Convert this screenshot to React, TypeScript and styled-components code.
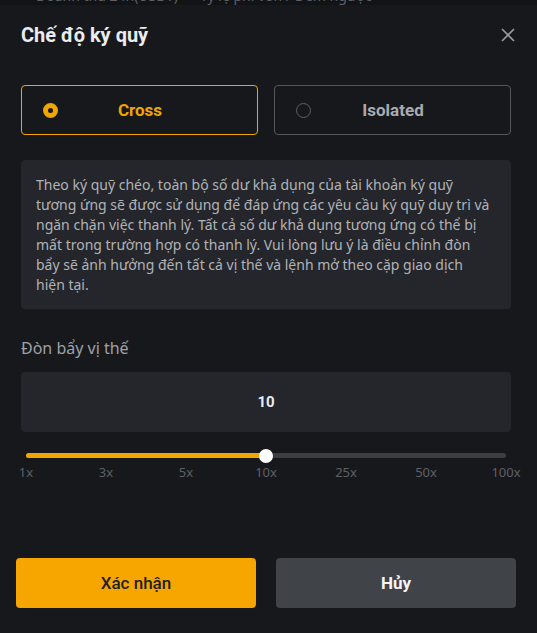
import React from "react";
import styled, { createGlobalStyle } from "styled-components";

const GlobalStyle = createGlobalStyle`
  html, body {
    margin: 0;
    padding: 0;
    height: 100%;
    background: #121316;
  }
  body {
    font-family: "Noto Sans", Roboto, "Liberation Sans", sans-serif;
  }
  #root {
    height: 100%;
  }
`;

const Page = styled.div`
  display: flex;
  flex-direction: column;
  height: 100%;
`;

const BackStrip = styled.div`
  height: 5px;
  overflow: hidden;
  background: #121316;
  flex-shrink: 0;
`;

const BackStripText = styled.div`
  display: flex;
  gap: 22px;
  margin-top: -12px;
  padding-left: 36px;
  font-size: 14px;
  line-height: 16px;
  color: #5f6167;
  white-space: nowrap;
`;

const Modal = styled.div`
  flex: 1;
  display: flex;
  flex-direction: column;
  background: #17181c;
  padding: 16px 0 25px;
`;

const Header = styled.div`
  display: flex;
  align-items: center;
  justify-content: space-between;
  padding: 0 21px 0 21px;
  height: 28px;
`;

const Title = styled.h2`
  margin: 0;
  font-family: Roboto, "Noto Sans", sans-serif;
  font-size: 20px;
  font-weight: 700;
  color: #eaecef;
`;

const CloseButton = styled.button`
  width: 16px;
  height: 16px;
  padding: 0;
  border: none;
  background: none;
  color: #9a9ca0;
  display: flex;
  align-items: center;
  justify-content: center;
  cursor: pointer;
`;

const Body = styled.div`
  display: flex;
  flex-direction: column;
  padding: 0 26px 0 21px;
`;

const ModeRow = styled.div`
  display: grid;
  grid-template-columns: 1fr 1fr;
  gap: 16px;
  margin-top: 36px;
`;

const ModeButton = styled.button<{ $active?: boolean }>`
  display: grid;
  grid-template-columns: 1fr auto 1fr;
  align-items: center;
  height: 50px;
  padding: 0 0 0 21px;
  background: transparent;
  border: 1.5px solid ${(p) => (p.$active ? "#f0a500" : "#55575c")};
  border-radius: 4px;
  font-family: Roboto, "Noto Sans", sans-serif;
  font-size: 17px;
  font-weight: 700;
  color: ${(p) => (p.$active ? "#f0a500" : "#a9abaf")};
  cursor: pointer;
`;

const Radio = styled.span<{ $active?: boolean }>`
  justify-self: start;
  box-sizing: border-box;
  width: 15px;
  height: 15px;
  border-radius: 50%;
  border: ${(p) => (p.$active ? "5px solid #f0a500" : "1.5px solid #5d5f64")};
  background: ${(p) => (p.$active ? "#17181c" : "transparent")};
`;

const ModeLabel = styled.span`
  transform: translateX(-10px);
`;

const InfoBox = styled.div`
  margin-top: 25px;
  background: #24262b;
  border-radius: 4px;
  padding: 15px 10px 14px 15px;
  font-size: 14px;
  line-height: 20px;
  color: #b1b3b7;
`;

const FieldLabel = styled.div`
  margin-top: 27px;
  font-size: 16px;
  line-height: 24px;
  color: #9fa1a6;
`;

const ValueBox = styled.div`
  margin-top: 12px;
  height: 60px;
  background: #24262b;
  border-radius: 4px;
  display: flex;
  align-items: center;
  justify-content: center;
  font-family: Roboto, "Noto Sans", sans-serif;
  font-size: 15px;
  font-weight: 700;
  color: #eaecef;
`;

const SliderWrap = styled.div`
  padding: 21px 5px 0;
`;

const Track = styled.div`
  position: relative;
  height: 5px;
  border-radius: 3px;
  background: #3c3e43;
`;

const Fill = styled.div`
  height: 100%;
  border-radius: 3px;
  background: #f0a500;
`;

const Knob = styled.div`
  position: absolute;
  top: 50%;
  width: 14px;
  height: 14px;
  margin: -7px 0 0 -7px;
  border-radius: 50%;
  background: #ffffff;
`;

const Marks = styled.div`
  display: flex;
  justify-content: space-between;
  margin-top: 6px;
`;

const Mark = styled.span`
  width: 0;
  display: flex;
  justify-content: center;
  white-space: nowrap;
  font-size: 13px;
  line-height: 16px;
  color: #5e6065;
`;

const Footer = styled.div`
  margin-top: auto;
  display: grid;
  grid-template-columns: 1fr 1fr;
  gap: 20px;
  padding: 0 21px 0 16px;
`;

const ActionButton = styled.button<{ $primary?: boolean }>`
  height: 50px;
  border: none;
  border-radius: 4px;
  font-family: Roboto, "Noto Sans", sans-serif;
  font-size: 17px;
  font-weight: ${(p) => (p.$primary ? 500 : 700)};
  background: ${(p) => (p.$primary ? "#f7a600" : "#404348")};
  color: ${(p) => (p.$primary ? "#1e2026" : "#f5f5f5")};
  cursor: pointer;
`;

const marks = ["1x", "3x", "5x", "10x", "25x", "50x", "100x"];

const infoLines = [
  "Theo ký quỹ chéo, toàn bộ số dư khả dụng của tài khoản ký quỹ",
  "tương ứng sẽ được sử dụng để đáp ứng các yêu cầu ký quỹ duy trì và",
  "ngăn chặn việc thanh lý. Tất cả số dư khả dụng tương ứng có thể bị",
  "mất trong trường hợp có thanh lý. Vui lòng lưu ý là điều chỉnh đòn",
  "bẩy sẽ ảnh hưởng đến tất cả vị thế và lệnh mở theo cặp giao dịch",
  "hiện tại.",
];

export default function App() {
  const [mode, setMode] = React.useState<"cross" | "isolated">("cross");
  const [step, setStep] = React.useState(3);
  const pct = (step / (marks.length - 1)) * 100;
  const leverage = parseInt(marks[step], 10);

  return (
    <Page>
      <GlobalStyle />
      <BackStrip>
        <BackStripText>
          <span>Doanh thu 24h(USDT)</span>
          <span>Tỷ lệ phí vốn / Đếm ngược</span>
        </BackStripText>
      </BackStrip>
      <Modal>
        <Header>
          <Title>Chế độ ký quỹ</Title>
          <CloseButton aria-label="Đóng">
            <svg width="14" height="14" viewBox="0 0 14 14">
              <path d="M1 1L13 13M13 1L1 13" stroke="currentColor" strokeWidth="1.6" />
            </svg>
          </CloseButton>
        </Header>
        <Body>
          <ModeRow>
            <ModeButton $active={mode === "cross"} onClick={() => setMode("cross")}>
              <Radio $active={mode === "cross"} />
              <ModeLabel>Cross</ModeLabel>
            </ModeButton>
            <ModeButton $active={mode === "isolated"} onClick={() => setMode("isolated")}>
              <Radio $active={mode === "isolated"} />
              <ModeLabel>Isolated</ModeLabel>
            </ModeButton>
          </ModeRow>
          <InfoBox>
            {infoLines.map((line, i) => (
              <React.Fragment key={i}>
                {line}
                {i < infoLines.length - 1 && <br />}
              </React.Fragment>
            ))}
          </InfoBox>
          <FieldLabel>Đòn bẩy vị thế</FieldLabel>
          <ValueBox>{leverage}</ValueBox>
          <SliderWrap>
            <Track>
              <Fill style={{ width: `${pct}%` }} />
              <Knob style={{ left: `${pct}%` }} />
            </Track>
            <Marks>
              {marks.map((m, i) => (
                <Mark key={m} onClick={() => setStep(i)}>
                  {m}
                </Mark>
              ))}
            </Marks>
          </SliderWrap>
        </Body>
        <Footer>
          <ActionButton $primary>Xác nhận</ActionButton>
          <ActionButton>Hủy</ActionButton>
        </Footer>
      </Modal>
    </Page>
  );
}
